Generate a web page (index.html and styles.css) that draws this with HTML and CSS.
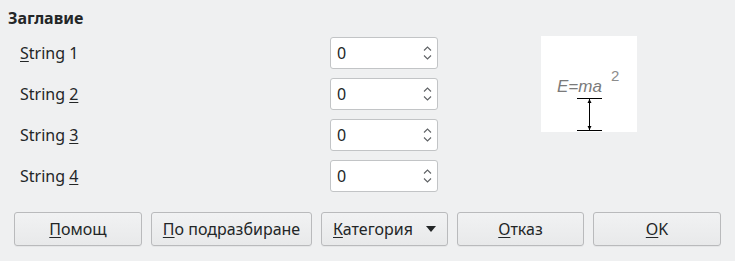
FILE: index.html
```html
<!DOCTYPE html>
<html>
<head>
<meta charset="utf-8">
<link rel="stylesheet" href="styles.css">
</head>
<body>
<div class="dialog">
  <div class="title">Заглавие</div>
  <div class="main">
    <div class="fields">
      <div class="label"><u>S</u>tring 1</div>
      <div class="spin"><span>0</span><svg class="arrows" width="9" height="14" viewBox="0 0 9 14"><polyline points="1,4.5 4.5,1 8,4.5"/><polyline points="1,9.5 4.5,13 8,9.5"/></svg></div>
      <div class="label">String <u>2</u></div>
      <div class="spin"><span>0</span><svg class="arrows" width="9" height="14" viewBox="0 0 9 14"><polyline points="1,4.5 4.5,1 8,4.5"/><polyline points="1,9.5 4.5,13 8,9.5"/></svg></div>
      <div class="label">String <u>3</u></div>
      <div class="spin"><span>0</span><svg class="arrows" width="9" height="14" viewBox="0 0 9 14"><polyline points="1,4.5 4.5,1 8,4.5"/><polyline points="1,9.5 4.5,13 8,9.5"/></svg></div>
      <div class="label">String <u>4</u></div>
      <div class="spin"><span>0</span><svg class="arrows" width="9" height="14" viewBox="0 0 9 14"><polyline points="1,4.5 4.5,1 8,4.5"/><polyline points="1,9.5 4.5,13 8,9.5"/></svg></div>
    </div>
    <div class="preview">
      <svg width="96" height="96" viewBox="0 0 96 96">
        <text x="16" y="56" class="formula">E=ma</text>
        <text x="70" y="45" class="sup">2</text>
        <g class="dim">
          <line x1="36" y1="62.5" x2="61" y2="62.5"/>
          <line x1="36" y1="94.5" x2="61" y2="94.5"/>
          <line x1="48.5" y1="63" x2="48.5" y2="94"/>
        </g>
        <polygon class="head" points="48.5,63 46.5,67 50.5,67"/>
        <polygon class="head" points="48.5,94 46.5,90 50.5,90"/>
      </svg>
    </div>
  </div>
  <div class="buttons">
    <button class="btn w128"><u>П</u>омощ</button>
    <button class="btn w161"><u>П</u>о подразбиране</button>
    <button class="btn w127 menu"><span><u>К</u>атегория</span><span class="tri"></span></button>
    <button class="btn w127"><u>О</u>тказ</button>
    <button class="btn w128"><u>O</u>K</button>
  </div>
</div>
</body>
</html>
```

FILE: styles.css
```css
html, body {
  margin: 0;
  padding: 0;
}
body {
  width: 735px;
  height: 261px;
  overflow: hidden;
  background: #eff0f1;
  font-family: "Noto Sans", "DejaVu Sans", sans-serif;
  font-size: 16px;
  color: #232627;
}
u {
  text-decoration: underline;
  text-decoration-thickness: 1px;
  text-underline-offset: 2px;
}
.dialog {
  padding: 9px 0 0 8px;
}
.title {
  font-weight: bold;
  line-height: 18px;
  height: 18px;
}
.main {
  display: flex;
  align-items: flex-start;
  margin-top: 10px;
}
.fields {
  display: grid;
  grid-template-columns: 310px 108px;
  row-gap: 9px;
  margin-left: 12px;
}
.label {
  line-height: 32px;
  height: 32px;
}
.spin {
  height: 32px;
  box-sizing: border-box;
  background: #fff;
  border: 1px solid #c2c4c6;
  border-radius: 3px;
  display: flex;
  align-items: center;
  justify-content: space-between;
  padding: 0 5px 0 6px;
}
.arrows polyline {
  fill: none;
  stroke: #5f6265;
  stroke-width: 1.1;
}
.preview {
  width: 96px;
  height: 96px;
  background: #fff;
  margin-left: 103px;
  margin-top: -1px;
}
.preview svg {
  display: block;
}
.formula {
  font-family: "Liberation Sans", Arial, sans-serif;
  font-style: italic;
  font-size: 17px;
  fill: #7a7a7a;
}
.sup {
  font-family: "Liberation Sans", Arial, sans-serif;
  font-size: 15px;
  fill: #8c8c8c;
}
.dim line {
  stroke: #000;
  stroke-width: 1;
}
.head {
  fill: #000;
}
.buttons {
  display: flex;
  gap: 9px;
  margin-top: 20px;
  padding-left: 6px;
}
.btn {
  height: 34px;
  box-sizing: border-box;
  border: 1px solid #b9babc;
  border-radius: 3px;
  background: linear-gradient(#f1f2f3, #e8e9ea);
  font-family: inherit;
  font-size: 16px;
  color: #232627;
  padding: 0;
  display: flex;
  align-items: center;
  justify-content: center;
  box-shadow: 0 1px 0 rgba(0,0,0,0.04);
}
.w128 { width: 128px; }
.w127 { width: 127px; }
.w161 { width: 161px; }
.btn.menu {
  justify-content: space-between;
  padding: 0 11px 0 11px;
}
.tri {
  width: 0;
  height: 0;
  border-left: 5px solid transparent;
  border-right: 5px solid transparent;
  border-top: 6px solid #232627;
}
```
